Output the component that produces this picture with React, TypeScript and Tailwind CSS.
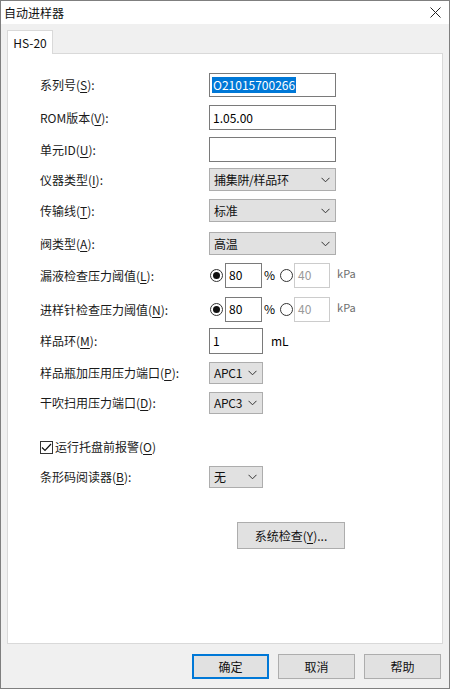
import React from 'react';

const font = { fontFamily: '"Microsoft YaHei", "Noto Sans CJK SC", "Noto Sans", sans-serif' };

function U({ children }: { children: React.ReactNode }) {
  return <span className="underline underline-offset-2">{children}</span>;
}

function Label({ text, k }: { text: string; k: string }) {
  return (
    <div className="w-[169px] shrink-0 text-[12px] text-[#1a1a1a]">
      {text}(<U>{k}</U>):
    </div>
  );
}

function Chevron() {
  return (
    <svg width="9" height="6" viewBox="0 0 9 6" className="shrink-0">
      <path d="M0.5 0.8 L4.5 4.8 L8.5 0.8" fill="none" stroke="#333" strokeWidth="1" />
    </svg>
  );
}

function Combo({ value, w, h = 23 }: { value: string; w: number; h?: number }) {
  return (
    <div
      className="flex items-center justify-between border border-[#adadad] bg-[#e1e1e1] pl-[4px] pr-[5px] text-[12px] text-[#111]"
      style={{ width: w, height: h }}
    >
      <span className="tracking-[-0.3px]">{value}</span>
      <Chevron />
    </div>
  );
}

function Radio({ on }: { on?: boolean }) {
  return (
    <div className="flex h-[13px] w-[13px] items-center justify-center rounded-full border border-[#333] bg-white">
      {on && <div className="h-[7px] w-[7px] rounded-full bg-[#111]" />}
    </div>
  );
}

function ThresholdRow({ text, k }: { text: string; k: string }) {
  return (
    <div className="flex h-[25px] items-center">
      <Label text={text} k={k} />
      <div className="flex h-full items-center">
        <div className="ml-[1px]">
          <Radio on />
        </div>
        <div className="ml-[2px] flex h-[25px] w-[37px] items-start border border-[#7a7a7a] bg-white pl-[3px] pt-[2px] text-[12px]">
          80
        </div>
        <span className="ml-[2px] -mt-[2px] text-[12px] leading-[14px]">%</span>
        <div className="ml-[5px]">
          <Radio />
        </div>
        <div className="ml-[1px] flex h-[25px] w-[36px] items-start border border-[#cccccc] bg-white pl-[3px] pt-[2px] text-[12px] text-[#9a9a9a]">
          40
        </div>
        <span className="-mt-[4px] ml-[7px] text-[11px] text-[#6d6d6d]">kPa</span>
      </div>
    </div>
  );
}

export default function App() {
  return (
    <div className="h-[689px] w-[450px] overflow-hidden bg-[#f0f0f0]" style={font}>
      <div className="flex h-full flex-col border border-[#7f7f7f]">
        {/* Title bar */}
        <div className="flex h-[23px] shrink-0 items-center justify-between bg-white pl-[3px] pr-[8px]">
          <span className="text-[12px] text-[#111]">自动进样器</span>
          <svg width="11" height="11" viewBox="0 0 11 11">
            <path d="M0.5 0.5 L10.5 10.5 M10.5 0.5 L0.5 10.5" stroke="#222" strokeWidth="1" />
          </svg>
        </div>

        {/* Tab */}
        <div className="flex pl-[6px] pt-[6px]">
          <div className="relative z-10 -mb-px flex h-[24px] w-[46px] items-center justify-center border border-b-0 border-[#d9d9d9] bg-white text-[12px] text-[#111]">
            HS-20
          </div>
        </div>

        {/* Panel */}
        <div className="mx-[6px] flex h-[591px] flex-col border border-[#d9d9d9] bg-white pl-[32px]">
          <div className="mt-[19px] flex h-[24px] items-center">
            <Label text="系列号" k="S" />
            <div className="flex h-[24px] w-[127px] items-center border border-[#7a7a7a] pl-[2px]">
              <span className="bg-[#0078d7] px-px text-[12px] leading-[16px] text-white">O21015700266</span>
            </div>
          </div>

          <div className="mt-[8px] flex h-[25px] items-center">
            <Label text="ROM版本" k="V" />
            <div className="flex h-[25px] w-[127px] items-center border border-[#7a7a7a] pl-[3px] text-[12px]">
              1.05.00
            </div>
          </div>

          <div className="mt-[7px] flex h-[25px] items-center">
            <Label text="单元ID" k="U" />
            <div className="h-[25px] w-[127px] border border-[#7a7a7a]" />
          </div>

          <div className="mt-[6px] flex h-[23px] items-center">
            <Label text="仪器类型" k="I" />
            <Combo value="捕集阱/样品环" w={127} />
          </div>

          <div className="mt-[8px] flex h-[23px] items-center">
            <Label text="传输线" k="T" />
            <Combo value="标准" w={127} />
          </div>

          <div className="mt-[10px] flex h-[23px] items-center">
            <Label text="阀类型" k="A" />
            <Combo value="高温" w={127} />
          </div>

          <div className="mt-[8px]">
            <ThresholdRow text="漏液检查压力阈值" k="L" />
          </div>

          <div className="mt-[9px]">
            <ThresholdRow text="进样针检查压力阈值" k="N" />
          </div>

          <div className="mt-[6px] flex h-[26px] items-center">
            <Label text="样品环" k="M" />
            <div className="flex h-[26px] w-[54px] items-start border border-[#7a7a7a] pl-[3px] pt-[3px] text-[12px]">
              1
            </div>
            <span className="ml-[8px] text-[12px]">mL</span>
          </div>

          <div className="mt-[8px] flex h-[22px] items-center">
            <Label text="样品瓶加压用压力端口" k="P" />
            <Combo value="APC1" w={54} h={22} />
          </div>

          <div className="mt-[8px] flex h-[22px] items-center">
            <Label text="干吹扫用压力端口" k="D" />
            <Combo value="APC3" w={54} h={22} />
          </div>

          <div className="mt-[25px] flex h-[16px] items-center">
            <div className="flex h-[13px] w-[13px] items-center justify-center border border-[#333] bg-white">
              <svg width="11" height="9" viewBox="0 0 11 9">
                <path d="M1 4.5 L4 7.5 L10 1" fill="none" stroke="#111" strokeWidth="1.2" />
              </svg>
            </div>
            <span className="ml-[2px] text-[12px] text-[#1a1a1a]">
              运行托盘前报警(<U>O</U>)
            </span>
          </div>

          <div className="mt-[11px] flex h-[22px] items-center">
            <Label text="条形码阅读器" k="B" />
            <Combo value="无" w={54} h={22} />
          </div>

          <div className="ml-[197px] mt-[34px] flex h-[27px] w-[108px] items-center justify-center border border-[#adadad] bg-[#e1e1e1] text-[12px] text-[#111]">
            系统检查(<U>Y</U>)...
          </div>
        </div>

        {/* Buttons */}
        <div className="mt-[10px] flex gap-[9px] pl-[191px]">
          <div className="flex h-[25px] w-[77px] items-center justify-center border-2 border-[#0078d7] bg-[#e1e1e1] text-[12px] text-[#111]">
            确定
          </div>
          <div className="flex h-[25px] w-[77px] items-center justify-center border border-[#adadad] bg-[#e1e1e1] text-[12px] text-[#111]">
            取消
          </div>
          <div className="flex h-[25px] w-[77px] items-center justify-center border border-[#adadad] bg-[#e1e1e1] text-[12px] text-[#111]">
            帮助
          </div>
        </div>
      </div>
    </div>
  );
}
